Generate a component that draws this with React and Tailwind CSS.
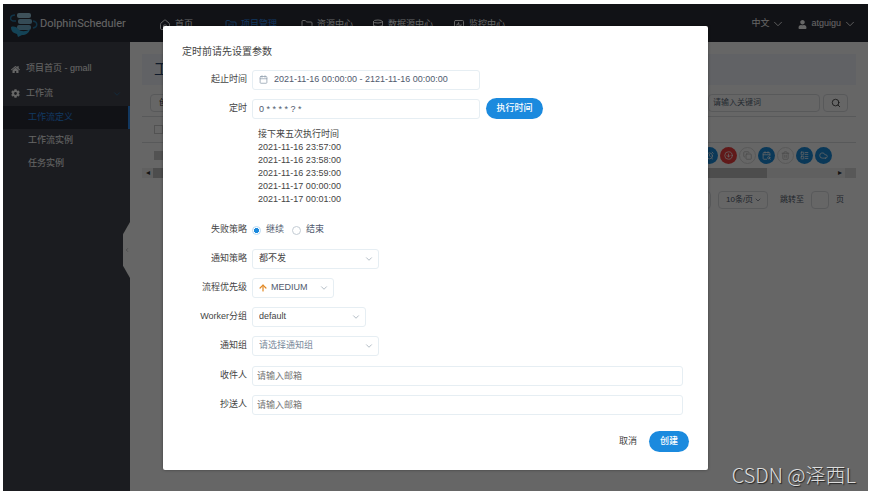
import {
  Home,
  FolderKanban,
  Folder,
  Database,
  SquareActivity,
  ChevronDown,
  ChevronLeft,
  Search,
  Calendar,
  ArrowUp,
  AlarmClock,
  Copy,
  CalendarSearch,
  Trash2,
  LayoutList,
  Cloud,
  CircleArrowDown,
} from "lucide-react";
import { FaHome, FaCog, FaUser } from "react-icons/fa";

const times = [
  "2021-11-16 23:57:00",
  "2021-11-16 23:58:00",
  "2021-11-16 23:59:00",
  "2021-11-17 00:00:00",
  "2021-11-17 00:01:00",
];

const navItems = [
  { icon: Home, label: "首页", width: "w-[66px]" },
  { icon: FolderKanban, label: "项目管理", width: "w-[76px]", active: true },
  { icon: Folder, label: "资源中心", width: "w-[71px]" },
  { icon: Database, label: "数据源中心", width: "w-[81px]" },
  { icon: SquareActivity, label: "监控中心", width: "w-[71px]" },
];

const actions = [
  { icon: AlarmClock, label: "定时", tone: "bg-[#1b8ddd] text-white" },
  { icon: CircleArrowDown, label: "下线", tone: "bg-[#f04040] text-white" },
  { icon: Copy, label: "复制", tone: "border border-[#dddddd] text-[#b5b5b5]" },
  { icon: CalendarSearch, label: "定时管理", tone: "bg-[#1b8ddd] text-white" },
  { icon: Trash2, label: "删除", tone: "border border-[#dddddd] text-[#b5b5b5]" },
  { icon: LayoutList, label: "树形图", tone: "bg-[#1b8ddd] text-white" },
  { icon: Cloud, label: "导出", tone: "bg-[#1b8ddd] text-white" },
];

function Logo() {
  return (
    <svg viewBox="0 0 28 25" className="h-[25px] w-7" fill="none" aria-hidden="true">
      <rect x="7" y="1" width="14" height="5" rx="2" fill="#9ccbe0" />
      <rect x="8" y="7" width="14" height="5" rx="2" fill="#86bcd6" />
      <rect x="7" y="13" width="14" height="5" rx="2" fill="#74b2d0" />
      <path d="M5 3C0 3-1 8 3 9h3M23 9c5 1 5 6 0 7" stroke="#287fae" strokeWidth="1.5" />
      <path d="M1 15c3-1 6 0 7 2 3 3 8 3 12 0-1 4-4 6-8 6l-4 2-1-3c-4-1-6-3-6-7Z" fill="#33a8d8" />
    </svg>
  );
}

function Header() {
  return (
    <header className="flex h-[38px] shrink-0 items-center bg-[#2c2e38] pl-[7px] pr-[11px] pt-[2px] text-[9px] text-white">
      <Logo />
      <span className="ml-0.5 w-[119px] font-['Roboto',sans-serif] text-[11px]">DolphinScheduler</span>
      <nav className="flex items-center pt-[2px]">
        {navItems.map(({ icon: Icon, label, width, active }) => (
          <a
            key={label}
            href="#"
            className={`flex shrink-0 items-center gap-1 whitespace-nowrap ${width} ${active ? "text-[#2d8cf0]" : ""}`}
          >
            <Icon size={12} className="shrink-0" />
            {label}
          </a>
        ))}
      </nav>
      <div className="ml-auto flex items-center gap-[13px]">
        <button type="button" className="flex items-center gap-[2px]">
          中文
          <ChevronDown size={14} strokeWidth={1.5} />
        </button>
        <button type="button" className="flex items-center gap-[2px]">
          <FaUser size={9} className="mr-[2px]" />
          atguigu
          <ChevronDown size={14} strokeWidth={1.5} />
        </button>
      </div>
    </header>
  );
}

function Sidebar() {
  return (
    <aside className="relative w-[127px] shrink-0 bg-[#454850] pt-[15px] text-[9px] text-white">
      <a href="#" className="flex h-6 items-center gap-1.5 pl-2">
        <FaHome size={9} />
        项目首页 - gmall
      </a>
      <a href="#" className="flex h-[25px] items-center gap-1.5 pl-2 pr-2">
        <FaCog size={9} />
        工作流
        <ChevronDown size={10} className="ml-auto text-[#2d6ea0]" />
      </a>
      <a href="#" className="flex h-[23px] items-center border-r-2 border-[#2d8cf0] bg-[#2c2e38] pl-[25px] text-[#2d8cf0]">
        工作流定义
      </a>
      <a href="#" className="flex h-[23px] items-center pl-[25px]">工作流实例</a>
      <a href="#" className="flex h-[23px] items-center pl-[25px]">任务实例</a>
      <button
        type="button"
        aria-label="收起菜单"
        className="absolute right-0 top-[180px] flex h-[56px] w-[7px] items-center justify-center bg-white text-[#888888] [clip-path:polygon(100%_0,0_22%,0_78%,100%_100%)]"
      >
        <ChevronLeft size={6} />
      </button>
    </aside>
  );
}

function Page() {
  return (
    <main className="min-w-0 flex-1 bg-white px-3 pt-[12px] text-[8px] text-[#333333]">
      <h1 className="flex h-[31px] items-center bg-[#f2f6fd] px-3 text-[15px] text-[#2a456b]">工作流定义</h1>
      <div className="flex h-[32px] items-center justify-between border-b border-[#dcdee2] pl-2 pr-2 pt-1">
        <button type="button" className="h-[18px] rounded-sm border border-[#dcdee2] px-2">创建工作流</button>
        <div className="flex gap-[3px]">
          <input
            type="text"
            aria-label="关键词"
            placeholder="请输入关键词"
            className="h-[18px] w-[112px] rounded-sm border border-[#dcdee2] px-1 placeholder:text-[#5a6b7c]"
          />
          <button
            type="button"
            aria-label="搜索"
            className="flex h-[18px] w-[25px] items-center justify-center rounded-sm border border-[#dcdee2]"
          >
            <Search size={10} />
          </button>
        </div>
      </div>
      <div className="flex h-[26px] items-center border-b border-[#dcdee2] pl-3">
        <input type="checkbox" aria-label="全选" className="size-[9px] appearance-none border border-[#cccccc]" />
      </div>
      <div className="flex h-[25px] items-center justify-between pl-3 pr-6">
        <input type="checkbox" aria-label="选择工作流" className="size-[9px] appearance-none bg-[#cccccc]" />
        <div className="flex gap-[2px]">
          {actions.map(({ icon: Icon, label, tone }) => (
            <button
              key={label}
              type="button"
              aria-label={label}
              className={`flex size-[17px] items-center justify-center rounded-full ${tone}`}
            >
              <Icon size={9} />
            </button>
          ))}
        </div>
      </div>
      <div className="flex h-[10px] items-center bg-[#f1f1f1] text-[8px]">
        <span className="w-[11px] text-center">◂</span>
        <span className="h-full w-[614px] bg-[#c1c1c1]" />
        <span className="ml-auto w-[11px] text-center">▸</span>
        <span className="h-full w-[11px] bg-[#dcdcdc]" />
      </div>
      <div className="flex items-center justify-end gap-[12px] pr-3 pt-[13px] text-[#515a6e]">
        <div className="flex gap-[7px]">
          <button type="button" aria-label="下一页" className="h-[18px] w-[18px] rounded-sm border border-[#dcdee2]" />
          <select
            aria-label="每页条数"
            className="h-[18px] w-[50px] appearance-none rounded-sm border border-[#dcdee2] pl-[7px]"
          >
            <option>10条/页</option>
          </select>
          <ChevronDown size={8} className="pointer-events-none -ml-[21px] mr-[6px] self-center" />
        </div>
        <label className="flex items-center gap-[7px]">
          跳转至
          <input type="text" className="h-[18px] w-[18px] rounded-sm border border-[#dcdee2]" />
          页
        </label>
      </div>
    </main>
  );
}

const box = "h-5 rounded-[3px] border border-[#e6eef3] bg-white text-[9px]";

function Row({ id, label, children, height = "h-[29px]" }) {
  return (
    <div className={`flex items-center ${height}`}>
      <label htmlFor={id} className="w-[65px] shrink-0 text-right">{label}</label>
      <div className="ml-[5px] flex min-w-0 flex-1 items-center">{children}</div>
    </div>
  );
}

function Select({ id, value, width, tone = "text-[#444444]", pad = "pl-[6px]" }) {
  return (
    <div className={`relative ${width}`}>
      <select id={id} className={`block w-full appearance-none ${box} ${tone} ${pad}`}>
        <option>{value}</option>
      </select>
      <ChevronDown size={10} className="pointer-events-none absolute right-[5px] top-[5px] text-[#a5b0bb]" />
    </div>
  );
}

function Dialog() {
  return (
    <section
      role="dialog"
      aria-label="定时前请先设置参数"
      className="w-[545px] rounded-[2px] bg-white px-[19px] pb-[18px] pt-[16px] text-[9px] text-[#444444] shadow-[0_0_3px_rgba(0,0,0,0.4)]"
    >
      <h2 className="h-[23px] text-[10px] leading-[19px]">定时前请先设置参数</h2>
      <Row id="range" label="起止时间">
        <div className={`flex w-[228px] items-center gap-[6px] px-[6px] ${box}`}>
          <Calendar size={9} className="shrink-0 text-[#8d9cab]" />
          <input
            id="range"
            type="text"
            defaultValue="2021-11-16 00:00:00 - 2121-11-16 00:00:00"
            className="min-w-0 flex-1 text-[9px] text-[#515a6e]"
          />
        </div>
      </Row>
      <Row id="cron" label="定时">
        <input id="cron" type="text" defaultValue="0 * * * * ? *" className={`w-[228px] px-[6px] text-[#515a6e] ${box}`} />
        <button type="button" className="ml-[6px] h-[21px] w-[57px] rounded-full bg-[#1b8ade] font-medium text-white">
          执行时间
        </button>
      </Row>
      <div className="ml-[76px] pt-[5px] leading-[13px]">
        <p>接下来五次执行时间</p>
        <ul>
          {times.map((time) => (
            <li key={time}>{time}</li>
          ))}
        </ul>
      </div>
      <div role="radiogroup" aria-labelledby="failure-label" className="flex h-[38px] items-center pt-[10px]">
        <span id="failure-label" className="w-[65px] text-right">失败策略</span>
        <label className="ml-[5px] flex w-[40px] items-center gap-[5px] text-[#515a6e]">
          <input type="radio" name="failure" defaultChecked className="size-[9px] appearance-none rounded-full border border-[#b9d9f2] checked:bg-[radial-gradient(circle,#1b8ade_45%,white_55%)]" />
          继续
        </label>
        <label className="flex items-center gap-[5px] text-[#515a6e]">
          <input type="radio" name="failure" className="size-[9px] appearance-none rounded-full border border-[#c3ccd4]" />
          结束
        </label>
      </div>
      <Row id="notify" label="通知策略">
        <Select id="notify" value="都不发" width="w-[127px]" />
      </Row>
      <Row id="priority" label="流程优先级">
        <div className="relative">
          <Select id="priority" value="MEDIUM" width="w-[82px]" pad="pl-[18px]" tone="text-[#515a6e]" />
          <ArrowUp size={10} strokeWidth={3} className="pointer-events-none absolute left-[6px] top-[5px] text-[#e28a27]" />
        </div>
      </Row>
      <Row id="worker" label="Worker分组">
        <Select id="worker" value="default" width="w-[114px]" />
      </Row>
      <Row id="group" label="通知组" height="h-[30px]">
        <Select id="group" value="请选择通知组" width="w-[127px]" tone="text-[#7a8a9b]" />
      </Row>
      <Row id="to" label="收件人">
        <input id="to" type="text" placeholder="请输入邮箱" className={`w-[431px] px-1 placeholder:text-[#757575] ${box}`} />
      </Row>
      <Row id="cc" label="抄送人" height="h-[30px]">
        <input id="cc" type="text" placeholder="请输入邮箱" className={`w-[431px] px-1 placeholder:text-[#757575] ${box}`} />
      </Row>
      <div className="flex items-center justify-end gap-[12px] pt-[11px]">
        <button type="button">取消</button>
        <button type="button" className="h-[21px] w-[40px] rounded-full bg-[#1b8ade] font-medium text-white">创建</button>
      </div>
    </section>
  );
}

export default function App() {
  return (
    <div className="h-screen bg-white pb-[5px] pl-[3px] pr-[3px] pt-1 font-['Liberation_Sans','Noto_Sans_CJK_SC',sans-serif]">
      <div className="relative flex h-full flex-col overflow-hidden">
        <Header />
        <div className="flex min-h-0 flex-1">
          <Sidebar />
          <Page />
        </div>
        <div className="absolute inset-0 flex items-start justify-center bg-black/60 pt-[22px]">
          <Dialog />
        </div>
        <p className="absolute bottom-[3px] right-[12px] font-['Noto_Sans_CJK_SC',sans-serif] text-[20px] font-light leading-[26px] text-[#dddddd] [text-shadow:1px_1px_1px_#222]">
          CSDN @泽西L
        </p>
      </div>
    </div>
  );
}
